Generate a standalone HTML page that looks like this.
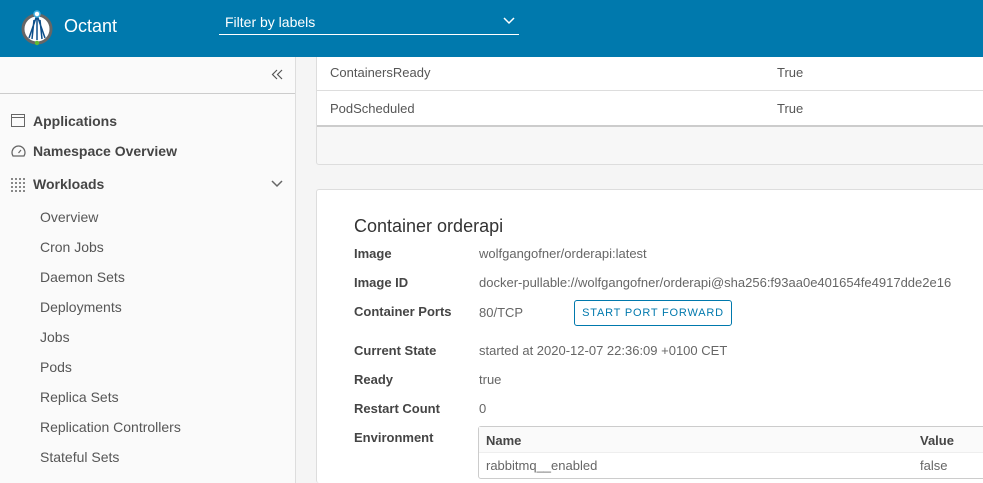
<!DOCTYPE html>
<html><head><meta charset="utf-8"><style>
*{box-sizing:border-box;margin:0;padding:0}
html{width:983px;height:483px;overflow:hidden}
body{width:983px;height:483px;overflow:hidden;font-family:"Liberation Sans",sans-serif;background:#f5f5f5;position:relative;color:#565656}
.hdr{position:absolute;left:0;top:0;width:983px;height:57px;background:#0079ad;z-index:5}
.logo{position:absolute;left:21px;top:10px}
.brand{position:absolute;left:64px;top:16px;color:#fff;font-size:18px}
.filter{position:absolute;left:219px;top:14px;width:300px;height:21px;border-bottom:1px solid #fff;color:#fff;font-size:14px;padding-left:6px}
.side{position:absolute;left:0;top:57px;width:296px;height:426px;background:#fafafa;border-right:1px solid #ddd}
.sb1{position:absolute;left:0;top:36px;width:295px;border-top:1px solid #ccc}
.t{position:absolute;font-size:14px;white-space:nowrap}
.b{font-weight:bold;color:#454545}
.sub{left:40px;color:#565656}
.card{position:absolute;background:#fff;border:1px solid #ddd;border-radius:3px}
.lab{position:absolute;left:354px;font-size:13px;font-weight:bold;color:#454545}
.val{position:absolute;left:479px;font-size:13px;color:#666;white-space:nowrap}
</style></head><body>
<div class="hdr">
<svg class="logo" width="34" height="36" viewBox="0 0 34 36"><circle cx="16" cy="19" r="14" fill="#fff" stroke="#666" stroke-width="3"/><path d="M16 5 L8 28 M16 5 L24 28 M16 5 L16 30 M13 10 L11 29 M19 10 L21 29" stroke="#0d4f8a" stroke-width="1.5" fill="none"/><circle cx="16" cy="4" r="3" fill="#fff" stroke="#41b0e0" stroke-width="1.5"/><circle cx="16" cy="33" r="2.2" fill="#60b932"/></svg>
<div class="brand">Octant</div>
<div class="filter">Filter by labels<svg style="position:absolute;right:4px;top:3px" width="12" height="8"><path d="M1 1 L6 6 L11 1" stroke="#fff" stroke-width="1.5" fill="none"/></svg></div>
</div>
<div class="side">
<svg style="position:absolute;left:271px;top:12px" width="12" height="11"><path d="M6 1 L1.5 5.5 L6 10 M11 1 L6.5 5.5 L11 10" stroke="#555" stroke-width="1.2" fill="none"/></svg>
<div class="sb1"></div>
<svg style="position:absolute;left:11px;top:57px" width="14" height="14"><rect x="0.5" y="0.5" width="13" height="12" fill="none" stroke="#666"/><line x1="0" y1="3.5" x2="14" y2="3.5" stroke="#666"/></svg>
<div class="t b" style="left:33px;top:56px">Applications</div>
<svg style="position:absolute;left:11px;top:87px" width="15" height="14"><path d="M2 12 A6.5 6.5 0 1 1 13 12 Z" fill="none" stroke="#666" stroke-width="1.2"/><line x1="7.5" y1="9" x2="10" y2="6" stroke="#666" stroke-width="1.2"/></svg>
<div class="t b" style="left:33px;top:86px">Namespace Overview</div>
<svg style="position:absolute;left:11px;top:121px" width="14" height="14" fill="#888"><g><rect x="0" y="0" width="2" height="2"/><rect x="4" y="0" width="2" height="2"/><rect x="8" y="0" width="2" height="2"/><rect x="12" y="0" width="2" height="2"/><rect x="0" y="4" width="2" height="2"/><rect x="4" y="4" width="2" height="2"/><rect x="8" y="4" width="2" height="2"/><rect x="12" y="4" width="2" height="2"/><rect x="0" y="8" width="2" height="2"/><rect x="4" y="8" width="2" height="2"/><rect x="8" y="8" width="2" height="2"/><rect x="12" y="8" width="2" height="2"/><rect x="0" y="12" width="2" height="2"/><rect x="4" y="12" width="2" height="2"/><rect x="8" y="12" width="2" height="2"/><rect x="12" y="12" width="2" height="2"/></g></svg>
<div class="t b" style="left:33px;top:119px">Workloads</div>
<svg style="position:absolute;left:271px;top:123px" width="12" height="8"><path d="M1 1 L6 6 L11 1" stroke="#666" stroke-width="1.5" fill="none"/></svg>
<div class="t sub" style="top:152px">Overview</div>
<div class="t sub" style="top:182px">Cron Jobs</div>
<div class="t sub" style="top:212px">Daemon Sets</div>
<div class="t sub" style="top:242px">Deployments</div>
<div class="t sub" style="top:272px">Jobs</div>
<div class="t sub" style="top:302px">Pods</div>
<div class="t sub" style="top:332px">Replica Sets</div>
<div class="t sub" style="top:362px">Replication Controllers</div>
<div class="t sub" style="top:392px">Stateful Sets</div>
</div>
<div class="card" style="left:316px;top:50px;width:690px;height:115px;background:#f7f7f7">
<div style="position:absolute;left:0;top:0;width:100%;height:76px;background:#fff;border-bottom:2px solid #ccc"></div>
<div style="position:absolute;left:0;top:39px;width:100%;border-top:1px solid #ddd"></div>
<div class="t" style="left:13px;top:14px;font-size:13px">ContainersReady</div>
<div class="t" style="left:460px;top:14px;font-size:13px">True</div>
<div class="t" style="left:13px;top:50px;font-size:13px">PodScheduled</div>
<div class="t" style="left:460px;top:50px;font-size:13px">True</div>
</div>
<div class="card" style="left:316px;top:189px;width:690px;height:294px;border-bottom:none"></div>
<div class="t" style="left:354px;top:216px;font-size:18px;color:#333">Container orderapi</div>
<div class="lab" style="top:246px">Image</div><div class="val" style="top:246px">wolfgangofner/orderapi:latest</div>
<div class="lab" style="top:275px">Image ID</div><div class="val" style="top:275px">docker-pullable://wolfgangofner/orderapi@sha256:f93aa0e401654fe4917dde2e16</div>
<div class="lab" style="top:304px">Container Ports</div><div class="val" style="top:305px">80/TCP</div>
<div style="position:absolute;left:574px;top:300px;width:158px;height:26px;border:1px solid #0079ad;border-radius:3px;color:#0079ad;font-size:11px;letter-spacing:0.8px;text-align:center;line-height:24px">START PORT FORWARD</div>
<div class="lab" style="top:343px">Current State</div><div class="val" style="top:343px">started at 2020-12-07 22:36:09 +0100 CET</div>
<div class="lab" style="top:372px">Ready</div><div class="val" style="top:372px">true</div>
<div class="lab" style="top:401px">Restart Count</div><div class="val" style="top:401px">0</div>
<div class="lab" style="top:430px">Environment</div>
<div style="position:absolute;left:478px;top:426px;width:520px;height:53px;border:1px solid #ccc;border-radius:3px;background:#fff">
<div style="height:26px;background:#fafafa;border-bottom:1px solid #eee"></div>
<div class="t" style="left:7px;top:6px;font-size:13px;font-weight:bold;color:#454545">Name</div>
<div class="t" style="left:441px;top:6px;font-size:13px;font-weight:bold;color:#454545">Value</div>
<div class="t" style="left:7px;top:31px;font-size:13px;color:#666">rabbitmq__enabled</div>
<div class="t" style="left:441px;top:31px;font-size:13px;color:#666">false</div>
</div>
</body></html>
